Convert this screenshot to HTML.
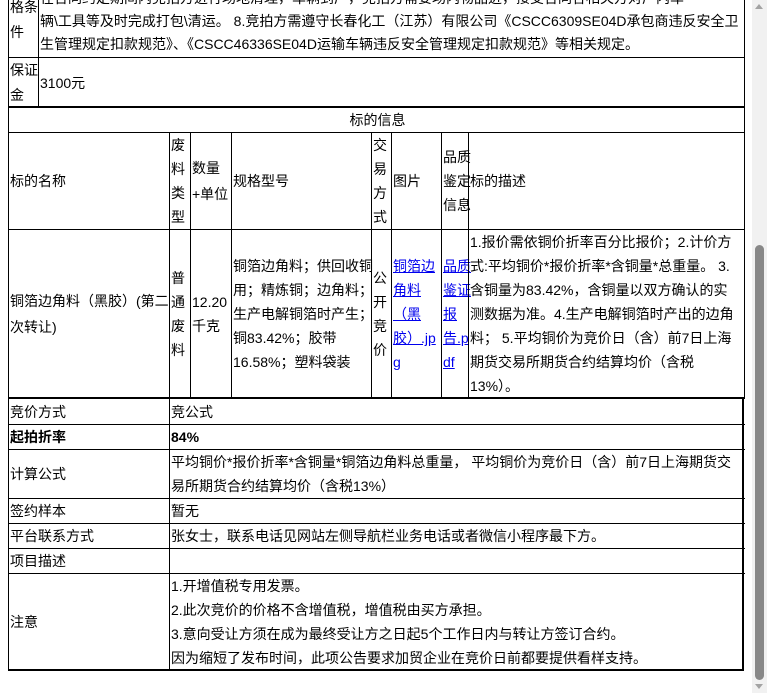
<!DOCTYPE html>
<html><head><meta charset="utf-8"><style>
*{margin:0;padding:0;box-sizing:border-box}
html,body{width:767px;height:693px;overflow:hidden;background:#fff}
body{font-family:"Liberation Sans","Noto Sans CJK SC",sans-serif;font-size:14px;color:#000;position:relative}
.c{position:absolute;border-left:1px solid #000;border-top:1px solid #000;display:flex;flex-direction:column;justify-content:center;padding-left:1px;white-space:nowrap;line-height:24px}
.h{position:absolute;background:#000}
a{color:#00e;text-decoration:underline}
.sb{position:absolute;left:752px;top:0;width:15px;height:693px;background:#f1f1f1}
.th{position:absolute;left:755px;top:245px;width:9px;height:435px;background:#888;border-radius:5px}
.up{position:absolute;left:755px;top:4px;border-left:4px solid transparent;border-right:4px solid transparent;border-bottom:5px solid #a3a3a3}
.dn{position:absolute;left:755px;top:684px;border-left:4px solid transparent;border-right:4px solid transparent;border-top:5px solid #a3a3a3}
</style></head><body>

<!-- top section -->
<div class="c" style="left:8px;top:-14px;width:30px;height:71px;justify-content:flex-start;padding-top:8px;line-height:25px">格条<br>件</div>
<div class="c" style="left:38px;top:-14px;width:707px;height:71px;justify-content:flex-start;padding-top:0;line-height:23px">在合同约定期间内竞拍方进行场地清理，车辆到厂，竞拍方需要场内物品进，接受合同各相关方对厂内车<br>辆\工具等及时完成打包\清运。 8.竞拍方需遵守长春化工（江苏）有限公司《CSCC6309SE04D承包商违反安全卫<br>生管理规定扣款规范》、《CSCC46336SE04D运输车辆违反安全管理规定扣款规范》等相关规定。</div>
<div class="c" style="left:8px;top:57px;width:30px;height:50px;line-height:25px">保证<br>金</div>
<div class="c" style="left:38px;top:57px;width:707px;height:50px">3100元</div>

<!-- section 2 -->
<div class="c" style="left:8px;top:107px;width:737px;height:25px;align-items:center">标的信息</div>
<div class="c" style="left:8px;top:132px;width:161px;height:97px">标的名称</div>
<div class="c" style="left:169px;top:132px;width:21px;height:97px">废<br>料<br>类<br>型</div>
<div class="c" style="left:190px;top:132px;width:41px;height:97px;line-height:26px">数量<br>+单位</div>
<div class="c" style="left:231px;top:132px;width:140px;height:97px">规格型号</div>
<div class="c" style="left:371px;top:132px;width:20px;height:97px">交<br>易<br>方<br>式</div>
<div class="c" style="left:391px;top:132px;width:50px;height:97px">图片</div>
<div class="c" style="left:441px;top:132px;width:27px;height:97px">品质<br>鉴定<br>信息</div>
<div class="c" style="left:468px;top:132px;width:277px;height:97px">标的描述</div>

<div class="c" style="left:8px;top:229px;width:161px;height:169px;line-height:26px">铜箔边角料（黑胶）(第二<br>次转让)</div>
<div class="c" style="left:169px;top:229px;width:21px;height:169px">普<br>通<br>废<br>料</div>
<div class="c" style="left:190px;top:229px;width:41px;height:169px">12.20<br>千克</div>
<div class="c" style="left:231px;top:229px;width:140px;height:169px">铜箔边角料；供回收铜<br>用；精炼铜；边角料；<br>生产电解铜箔时产生；<br>铜83.42%；胶带<br>16.58%；塑料袋装</div>
<div class="c" style="left:371px;top:229px;width:20px;height:169px">公<br>开<br>竞<br>价</div>
<div class="c" style="left:391px;top:229px;width:50px;height:169px"><a>铜箔边<br>角料<br>（黑<br>胶）.jp<br>g</a></div>
<div class="c" style="left:441px;top:229px;width:27px;height:169px"><a>品质<br>鉴证<br>报<br>告.p<br>df</a></div>
<div class="c" style="left:468px;top:229px;width:277px;height:169px">1.报价需依铜价折率百分比报价；2.计价方<br>式:平均铜价*报价折率*含铜量*总重量。 3.<br>含铜量为83.42%，含铜量以双方确认的实<br>测数据为准。4.生产电解铜箔时产出的边角<br>料； 5.平均铜价为竞价日（含）前7日上海<br>期货交易所期货合约结算均价（含税<br>13%）。</div>
<div class="h" style="left:744px;top:-14px;width:1px;height:412px"></div>

<!-- section 3 -->
<div class="c" style="left:8px;top:398px;width:161px;height:26px">竞价方式</div>
<div class="c" style="left:169px;top:398px;width:576px;height:26px">竞公式</div>
<div class="c" style="left:8px;top:424px;width:161px;height:25px;font-weight:bold">起拍折率</div>
<div class="c" style="left:169px;top:424px;width:576px;height:25px;font-weight:bold">84%</div>
<div class="c" style="left:8px;top:449px;width:161px;height:49px">计算公式</div>
<div class="c" style="left:169px;top:449px;width:576px;height:49px">平均铜价*报价折率*含铜量*铜箔边角料总重量， 平均铜价为竞价日（含）前7日上海期货交<br>易所期货合约结算均价（含税13%）</div>
<div class="c" style="left:8px;top:498px;width:161px;height:25px">签约样本</div>
<div class="c" style="left:169px;top:498px;width:576px;height:25px">暂无</div>
<div class="c" style="left:8px;top:523px;width:161px;height:25px">平台联系方式</div>
<div class="c" style="left:169px;top:523px;width:576px;height:25px">张女士，联系电话见网站左侧导航栏业务电话或者微信小程序最下方。</div>
<div class="c" style="left:8px;top:548px;width:161px;height:25px">项目描述</div>
<div class="c" style="left:169px;top:548px;width:576px;height:25px"></div>
<div class="c" style="left:8px;top:573px;width:161px;height:97px">注意</div>
<div class="c" style="left:169px;top:573px;width:576px;height:97px">1.开增值税专用发票。<br>2.此次竞价的价格不含增值税，增值税由买方承担。<br>3.意向受让方须在成为最终受让方之日起5个工作日内与转让方签订合约。<br>因为缩短了发布时间，此项公告要求加贸企业在竞价日前都要提供看样支持。</div>

<!-- thick lines -->
<div class="h" style="left:8px;top:106px;width:737px;height:2px"></div>
<div class="h" style="left:8px;top:397px;width:736px;height:2px"></div>
<div class="h" style="left:742px;top:397px;width:2px;height:274px"></div>
<div class="h" style="left:8px;top:669px;width:736px;height:2px"></div>
<div class="h" style="left:8px;top:397px;width:1px;height:274px"></div>

<div class="sb"></div><div class="th"></div><div class="up"></div><div class="dn"></div>
</body></html>
